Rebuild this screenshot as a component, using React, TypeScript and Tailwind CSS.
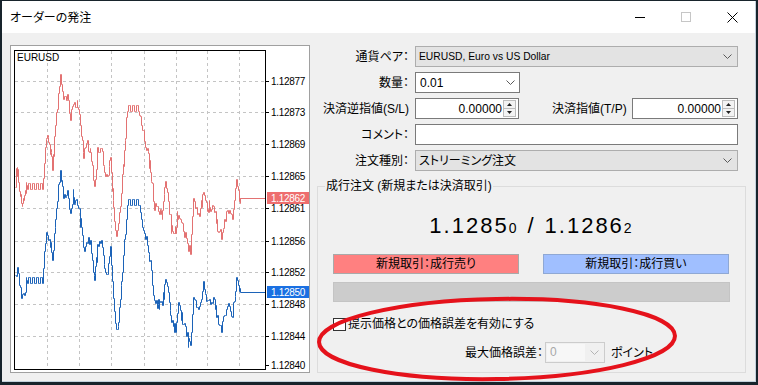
import React from 'react';

function rng(seed: number) {
  let s = seed;
  return function () {
    s |= 0;
    s = (s + 0x6d2b79f5) | 0;
    let t = Math.imul(s ^ (s >>> 15), 1 | s);
    t = (t + Math.imul(t ^ (t >>> 7), 61 | t)) ^ t;
    return ((t ^ (t >>> 14)) >>> 0) / 4294967296;
  };
}

const KEYS: [number, number][] = [
  [15, 280], [17, 268], [21, 298], [25, 288], [27, 280], [42, 280], [46, 230], [49, 240], [52, 260],
  [56, 210], [60, 167], [63, 193], [67, 192], [70, 210], [73, 200], [76, 198], [79, 205], [80, 215],
  [83, 250], [87, 238], [90, 243], [94, 283], [97, 245], [101, 240], [104, 265], [107, 275], [110, 247],
  [113, 300], [116, 330], [118, 320], [121, 283], [125, 230], [127, 202], [138, 202], [141, 220],
  [146, 240], [150, 262], [154, 300], [159, 305], [162, 303], [165, 277], [167, 287], [171, 320],
  [175, 330], [178, 305], [182, 320], [185, 330], [188, 340], [190, 347], [193, 293], [197, 310],
  [200, 305], [203, 285], [207, 300], [210, 305], [213, 297], [217, 320], [221, 330], [224, 315],
  [228, 302], [232, 315], [236, 277], [238, 287], [240, 292],
];

function interp(x: number) {
  for (let i = 0; i < KEYS.length - 1; i++) {
    const [x0, y0] = KEYS[i];
    const [x1, y1] = KEYS[i + 1];
    if (x >= x0 && x <= x1) {
      return y0 + ((y1 - y0) * (x - x0)) / (x1 - x0 || 1);
    }
  }
  return KEYS[KEYS.length - 1][1];
}

function buildPath(offset: number, seed: number) {
  const r = rng(seed);
  let d = '';
  for (let x = 15; x <= 240; x++) {
    const base = interp(x) - offset;
    const inComb = (x >= 27 && x <= 42) || (x >= 127 && x <= 138);
    const px = x + 0.5;
    if (inComb) {
      const y = Math.round(base + ((x >> 1) % 2 === 0 ? -3 : 3)) + 0.5;
      d += `H${px}V${y}`;
      continue;
    }
    let y = base + (r() - 0.5) * 10;
    const spike = r() < 0.18 ? (r() - 0.5) * 18 : 0;
    y = Math.round(y) + 0.5;
    if (x === 15) {
      d += `M${px} ${y}`;
    } else if (spike !== 0) {
      d += `H${px}V${Math.round(y + spike) + 0.5}V${y}`;
    } else {
      d += `H${px}V${y}`;
    }
  }
  d += `V${292 - offset + 0.5}H265`;
  return d;
}

const BLUE = buildPath(0, 7);
const RED = buildPath(94, 13);

const AXIS: [string, number][] = [
  ['1.12877', 81], ['1.12873', 112], ['1.12869', 144], ['1.12865', 176], ['1.12861', 208],
  ['1.12856', 241], ['1.12852', 272], ['1.12848', 304], ['1.12844', 336], ['1.12840', 365],
];
const HGRID = [81, 112, 144, 176, 208, 241, 272, 304, 336];
const VGRID = [47, 79, 111, 144, 176, 207, 239];

function Chart() {
  return (
    <svg width="298" height="326" viewBox="11 46 298 326" className="block">
      <rect x="11" y="46" width="298" height="326" fill="#ffffff" />
      {HGRID.map((y) => (
        <line key={'h' + y} x1="15" x2="265" y1={y + 0.5} y2={y + 0.5} stroke="#c4c4c4" strokeDasharray="3 3" />
      ))}
      {VGRID.map((x) => (
        <line key={'v' + x} x1={x + 0.5} x2={x + 0.5} y1="51" y2="369" stroke="#c4c4c4" strokeDasharray="3 3" />
      ))}
      <path d={RED} fill="none" stroke="#e37272" strokeWidth="1" />
      <path d={BLUE} fill="none" stroke="#1c63b8" strokeWidth="1" />
      <rect x="14.5" y="50.5" width="251" height="319" fill="none" stroke="#000" strokeWidth="1" />
      <text x="17" y="61" fontSize="10" fontFamily="Liberation Sans, sans-serif" fill="#000">EURUSD</text>
      {AXIS.map(([t, y]) => (
        <g key={t}>
          <line x1="265" x2="269" y1={y + 0.5} y2={y + 0.5} stroke="#000" />
          <text x="271" y={y + 4} fontSize="10" letterSpacing="-0.3" fontFamily="Liberation Sans, sans-serif" fill="#000">{t}</text>
        </g>
      ))}
      <rect x="267" y="192" width="42" height="12" fill="#ee6e6e" />
      <text x="271" y="202" fontSize="10" letterSpacing="-0.3" fontFamily="Liberation Sans, sans-serif" fill="#ffffff">1.12862</text>
      <rect x="267" y="286" width="42" height="12" fill="#1a70e2" />
      <text x="271" y="296" fontSize="10" letterSpacing="-0.3" fontFamily="Liberation Sans, sans-serif" fill="#ffffff">1.12850</text>
    </svg>
  );
}

function Chevron({ color = '#5a5a5a' }: { color?: string }) {
  return (
    <svg width="9" height="5" viewBox="0 0 9 5" className="block">
      <polyline points="0.5,0.5 4.5,4.5 8.5,0.5" fill="none" stroke={color} strokeWidth="1" />
    </svg>
  );
}

function Spin() {
  return (
    <div className="ml-auto mr-[2px] w-[13px] h-[17px] border border-[#bdbdbd] bg-[#f3f3f3] flex flex-col shrink-0">
      <div className="flex-1 flex items-center justify-center border-b border-[#bdbdbd]">
        <svg width="5" height="3" viewBox="0 0 5 3" className="block"><polygon points="0,3 2.5,0 5,3" fill="#222" /></svg>
      </div>
      <div className="flex-1 flex items-center justify-center">
        <svg width="5" height="3" viewBox="0 0 5 3" className="block"><polygon points="0,0 5,0 2.5,3" fill="#222" /></svg>
      </div>
    </div>
  );
}

function Label({ children }: { children: React.ReactNode }) {
  return <div className="w-[97px] text-right leading-[16px] whitespace-nowrap shrink-0">{children}</div>;
}

export default function App() {
  return (
    <div className="relative w-[758px] h-[385px] overflow-hidden bg-[#18242c] pt-[1px] pl-[2px] pr-[2px] pb-[3px] font-['Liberation_Sans','Noto_Sans_CJK_JP',sans-serif] text-[12px] text-black [font-feature-settings:'palt']">
      <div className="flex flex-col w-full h-full bg-[#f0f0f0] border-r border-b border-[#c3d1dc]">
        {/* title bar */}
        <div className="h-[32px] bg-white flex items-center justify-between shrink-0">
          <div className="pl-[8px] text-[12px] leading-[16px] font-['Noto_Sans_CJK_JP',sans-serif]">オーダーの発注</div>
          <div className="flex h-full">
            <div className="w-[46px] h-full flex items-center justify-center">
              <div className="w-[10px] h-[1px] bg-[#000]" />
            </div>
            <div className="w-[46px] h-full flex items-center justify-center">
              <div className="w-[10px] h-[10px] border border-[#c6c6c6]" />
            </div>
            <div className="w-[46px] h-full flex items-center justify-center">
              <svg width="11" height="11" viewBox="0 0 11 11" className="block">
                <line x1="0.5" y1="0.5" x2="10.5" y2="10.5" stroke="#000" strokeWidth="1" />
                <line x1="10.5" y1="0.5" x2="0.5" y2="10.5" stroke="#000" strokeWidth="1" />
              </svg>
            </div>
          </div>
        </div>

        {/* body */}
        <div className="flex-1 flex pt-[12px] pl-[8px]">
          <div className="w-[300px] h-[328px] border border-[#a0a0a0] bg-white shrink-0">
            <Chart />
          </div>

          <div className="ml-[2px] w-[434px] flex flex-col">
            <div className="mt-[1px] flex flex-col gap-[5px]">
              <div className="flex items-center h-[21px]">
                <Label>通貨ペア：</Label>
                <div className="ml-[6px] w-[323px] h-[21px] border border-[#adadad] bg-[#e3e3e3] flex items-center justify-between pl-[3px] pr-[5px]">
                  <span className="text-[10.3px]">EURUSD, Euro vs US Dollar</span>
                  <Chevron />
                </div>
              </div>
              <div className="flex items-center h-[21px]">
                <Label>数量：</Label>
                <div className="ml-[6px] w-[105px] h-[21px] border border-[#7a7a7a] bg-white flex items-center justify-between pl-[4px] pr-[4px]">
                  <span>0.01</span>
                  <Chevron />
                </div>
              </div>
              <div className="flex items-center h-[21px]">
                <Label>決済逆指値(S/L)</Label>
                <div className="ml-[6px] w-[104px] h-[21px] border border-[#7a7a7a] bg-white flex items-center">
                  <span className="flex-1 text-right pr-[1px]">0.00000</span>
                  <Spin />
                </div>
                <div className="ml-[33px] w-[74px] leading-[16px] whitespace-nowrap">決済指値(T/P)</div>
                <div className="ml-[6px] w-[106px] h-[21px] border border-[#7a7a7a] bg-white flex items-center">
                  <span className="flex-1 text-right pr-[1px]">0.00000</span>
                  <Spin />
                </div>
              </div>
              <div className="flex items-center h-[21px]">
                <Label>コメント：</Label>
                <div className="ml-[6px] w-[323px] h-[21px] border border-[#7a7a7a] bg-white" />
              </div>
              <div className="flex items-center h-[21px]">
                <Label>注文種別：</Label>
                <div className="ml-[6px] w-[323px] h-[21px] border border-[#adadad] bg-[#e3e3e3] flex items-center justify-between pl-[3px] pr-[5px]">
                  <span>ストリーミング注文</span>
                  <Chevron />
                </div>
              </div>
            </div>

            <fieldset className="ml-[5px] mt-[7px] w-[429px] h-[195px] border border-[#dcdcdc] flex flex-col">
              <legend className="ml-[7px] px-[1px] leading-[16px]">成行注文 (新規または決済取引)</legend>
              <div className="mt-[19px] h-[26px] text-center font-['Liberation_Sans',sans-serif] text-[22px] leading-[26px] tracking-[2px] whitespace-nowrap">
                1.1285<span className="text-[14px]">0</span>
                <span className="ml-[9px] mr-[9px]">/</span>
                1.1286<span className="text-[14px]">2</span>
              </div>
              <div className="mt-[15px] flex px-[15px] gap-[24px]">
                <div className="w-[186px] h-[20px] border border-[#a9a9a9] bg-[#ff8080] flex items-center justify-center leading-[16px]">新規取引：成行売り</div>
                <div className="w-[186px] h-[20px] border border-[#8fa8d4] bg-[#a0bfff] flex items-center justify-center leading-[16px]">新規取引：成行買い</div>
              </div>
              <div className="mt-[8px] mx-[15px] h-[20px] bg-[#cccccc] border border-[#c4c4c4]" />
              <div className="mt-[14px] flex items-center h-[16px] pl-[15px]">
                <div className="w-[13px] h-[13px] border border-[#333333] bg-white shrink-0" />
                <span className="ml-[2px] leading-[16px]">提示価格との価格誤差を有効にする</span>
              </div>
              <div className="mt-[10px] flex items-center h-[21px]">
                <div className="ml-[138px] w-[87px] text-right leading-[16px] whitespace-nowrap">最大価格誤差：</div>
                <div className="ml-[2px] w-[60px] h-[21px] border border-[#cccccc] bg-[#f0f0f0] flex items-center">
                  <div className="ml-[1px] w-[38px] h-[17px] bg-[#f7f7f7] pl-[3px] leading-[17px] text-[#a8a8a8]">0</div>
                  <div className="ml-auto mr-[5px]"><Chevron color="#b4b4b4" /></div>
                </div>
                <span className="ml-[6px] leading-[16px]">ポイント</span>
              </div>
            </fieldset>
          </div>
        </div>
      </div>

      <svg className="absolute left-0 top-0 pointer-events-none" width="758" height="385" viewBox="0 0 758 385">
        <ellipse cx="497" cy="339" rx="178" ry="40" fill="none" stroke="#e5121b" strokeWidth="4" transform="rotate(-1 497 339)" />
      </svg>
    </div>
  );
}
